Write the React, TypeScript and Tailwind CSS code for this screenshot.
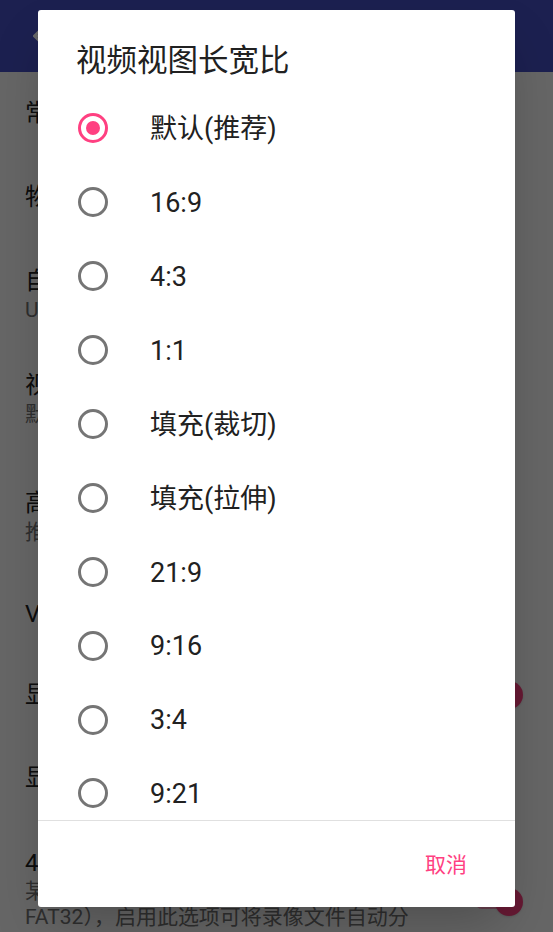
import React from 'react';
import { ArrowLeft } from 'lucide-react';

const options = ['默认(推荐)', '16:9', '4:3', '1:1', '填充(裁切)', '填充(拉伸)', '21:9', '9:16', '3:4', '9:21'];

function Switch() {
  // only the thumb end peeks out from behind the dialog
  return (
    <div className="relative w-[52px] h-[28px] shrink-0">
      <div className="absolute left-[4px] top-[7px] w-[44px] h-[14px] rounded-full bg-[#ff4081]/50" />
      <div className="absolute right-0 top-0 w-[28px] h-[28px] rounded-full bg-[#ff4081] shadow" />
    </div>
  );
}

function Pref({ title, sub, h, right }: { title: string; sub?: string[]; h: string; right?: React.ReactNode }) {
  return (
    <div className={`${h} flex items-center justify-between pl-[25px] pr-[30px] shrink-0`}>
      <div className="flex flex-col">
        <span className="text-[24px] leading-[30px] text-[#212121]">{title}</span>
        {sub && sub.map((s) => (
          <span key={s} className="text-[21px] leading-[28px] text-[#757575]">{s}</span>
        ))}
      </div>
      {right}
    </div>
  );
}

function Radio({ checked }: { checked: boolean }) {
  return (
    <div
      className={`w-[30px] h-[30px] rounded-full border-[3px] flex items-center justify-center shrink-0 ${
        checked ? 'border-[#ff4081]' : 'border-[#757575]'
      }`}
    >
      {checked && <div className="w-[14px] h-[14px] rounded-full bg-[#ff4081]" />}
    </div>
  );
}

export default function App() {
  return (
    <div className="relative w-[553px] h-[932px] overflow-hidden bg-white font-['Roboto','Noto_Sans_CJK_SC',sans-serif]">
      {/* settings page behind the dialog */}
      <header className="h-[72px] bg-[#4850c8] flex items-center gap-8 pl-[29px] pr-[22px] text-white">
        <ArrowLeft className="w-[26px] h-[26px]" strokeWidth={2.5} />
        <span className="text-[28px]">设置</span>
      </header>
      <div className="flex flex-col">
        <Pref h="h-[82px]" title="常规设置" />
        <Pref h="h-[86px]" title="物理按键设置" />
        <Pref h="h-[110px]" title="自动启动" sub={['USB设备连接时自动打开应用']} />
        <Pref h="h-[97px]" title="视频视图长宽比" sub={['默认(推荐)']} />
        <Pref h="h-[140px]" title="高清预览" sub={['推荐开启以获得更清晰的画面']} />
        <Pref h="h-[54px]" title="VR模式" />
        <Pref h="h-[108px]" title="显示帧率" right={<Switch />} />
        <Pref h="h-[58px]" title="显示时间戳" />
        <div className="h-[190px] flex items-center justify-between pl-[25px] pr-[30px]">
          <div className="flex flex-col">
            <span className="text-[24px] leading-[30px] text-[#212121]">4GB文件分割</span>
            <span className="text-[21px] leading-[26px] text-[#757575]">某些文件系统不支持大于4GB的文件（如</span>
            <span className="text-[21px] leading-[26px] text-[#757575]">FAT32），启用此选项可将录像文件自动分</span>
            <span className="text-[21px] leading-[26px] text-[#757575]">割为多个小文件</span>
          </div>
          <Switch />
        </div>
      </div>

      {/* scrim */}
      <div className="absolute inset-0 bg-black/60" />

      {/* dialog */}
      <div className="absolute left-[38px] top-[10px] w-[477px] h-[897px] bg-white rounded-[3px] shadow-2xl flex flex-col">
        <div className="h-[81px] pt-[33px] pl-[38px] shrink-0">
          <h2 className="text-[30.5px] leading-[36px] text-[#212121] font-normal">视频视图长宽比</h2>
        </div>
        <div className="h-[729px] overflow-hidden shrink-0">
          {options.map((o, i) => (
            <div key={o} className="h-[73.9px] flex items-center pl-[40px] gap-[42px] pt-[1px]">
              <Radio checked={i === 0} />
              <span className="text-[27px] text-[#212121] mt-[2px]">{o}</span>
            </div>
          ))}
        </div>
        <div className="border-t border-[#e0e0e0] flex-1 flex items-center justify-end pr-[48px] pt-[3px]">
          <span className="text-[21px] text-[#ff4081]">取消</span>
        </div>
      </div>
    </div>
  );
}
